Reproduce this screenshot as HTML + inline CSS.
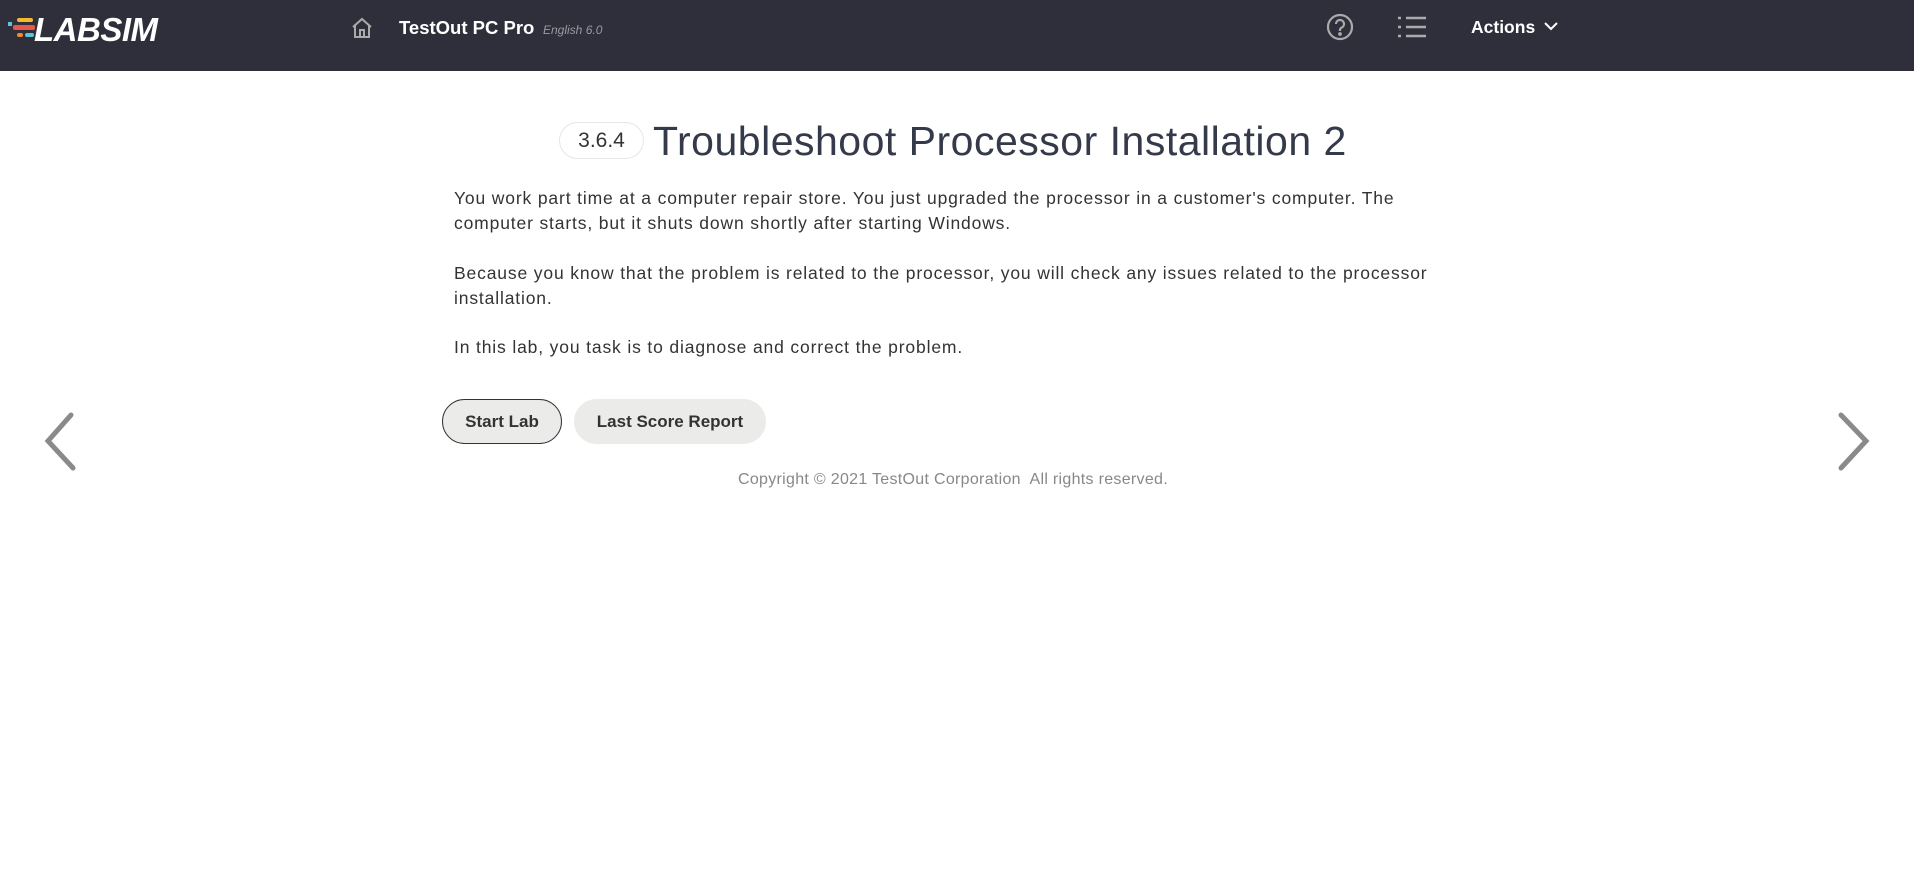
<!DOCTYPE html>
<html><head><meta charset="utf-8"><style>
*{margin:0;padding:0;box-sizing:border-box}
body{width:1914px;height:884px;background:#fff;font-family:"Liberation Sans",sans-serif;position:relative;overflow:hidden;color:#333}
.hdr{position:absolute;left:0;top:0;width:1914px;height:71px;background:#2e2f3b}
.abs{position:absolute;white-space:nowrap}
.p{font-size:17.5px;color:#333;line-height:25px;letter-spacing:0.85px}
.btn{position:absolute;height:45px;border-radius:23px;background:#ebebea;font-weight:bold;font-size:17px;color:#333;display:flex;align-items:center;justify-content:center}
</style></head><body>
<div class="hdr">
  <div class="abs" style="left:8px;top:22px;width:4px;height:4px;background:#5bc6d8"></div>
  <div class="abs" style="left:17px;top:18px;width:16px;height:4px;background:#f5b82e;border-radius:2px"></div>
  <div class="abs" style="left:13px;top:25px;width:22px;height:5px;background:#e8584a;border-radius:2px"></div>
  <div class="abs" style="left:17px;top:33px;width:6px;height:4px;background:#f08a2c;border-radius:2px"></div>
  <div class="abs" style="left:25px;top:33px;width:9px;height:4px;background:#5bc6d8;border-radius:2px"></div>
  <div class="abs" style="left:34px;top:11px;font-size:33px;font-weight:bold;font-style:italic;color:#fff;letter-spacing:-0.5px">LABSIM</div>
  <svg class="abs" style="left:350px;top:16px" width="24" height="24" viewBox="0 0 24 24" fill="none" stroke="#aaa" stroke-width="2"><path d="M3 11 L12 3 L21 11 M5 9 V21 H19 V9 M10 21 V14 H14 V21"/></svg>
  <div class="abs" style="left:399px;top:17px;font-size:18.5px;font-weight:bold;color:#fff">TestOut PC Pro</div>
  <div class="abs" style="left:543px;top:23px;font-size:12px;font-style:italic;color:#9a9aa0">English 6.0</div>
  <svg class="abs" style="left:1326px;top:13px" width="28" height="28" viewBox="0 0 28 28" fill="none" stroke="#aaa" stroke-width="2.2"><circle cx="14" cy="14" r="12"/><path d="M10 11 a4 4 0 1 1 5.5 3.7 c-1 .5-1.5 1.2-1.5 2.3v1"/><circle cx="14" cy="21" r="0.8" fill="#aaa"/></svg>
  <svg class="abs" style="left:1397px;top:15px" width="30" height="24" viewBox="0 0 30 24" stroke="#aaa" stroke-width="2.5"><path d="M1 3h3M9 3h20M1 12h3M9 12h20M1 21h3M9 21h20"/></svg>
  <div class="abs" style="left:1471px;top:17px;font-size:17.5px;font-weight:bold;color:#fff">Actions</div>
  <svg class="abs" style="left:1543px;top:21px" width="16" height="10" viewBox="0 0 16 10" fill="none" stroke="#fff" stroke-width="2"><path d="M2 2 L8 8 L14 2"/></svg>
</div>
<div class="abs" style="left:559px;top:122px;width:85px;height:37px;border:1px solid #e6e6e6;border-radius:19px;font-size:21px;color:#333;display:flex;align-items:center;justify-content:center">3.6.4</div>
<div class="abs" style="left:653px;top:118px;font-size:41px;color:#343a4a;letter-spacing:0.5px">Troubleshoot Processor Installation 2</div>
<div class="abs p" style="left:454px;top:186px">You work part time at a computer repair store. You just upgraded the processor in a customer's computer. The<br>computer starts, but it shuts down shortly after starting Windows.</div>
<div class="abs p" style="left:454px;top:261px">Because you know that the problem is related to the processor, you will check any issues related to the processor<br>installation.</div>
<div class="abs p" style="left:454px;top:335px">In this lab, you task is to diagnose and correct the problem.</div>
<div class="btn" style="left:442px;top:399px;width:120px;border:1px solid #333">Start Lab</div>
<div class="btn" style="left:574px;top:399px;width:192px">Last Score Report</div>
<div class="abs" style="left:0;width:1906px;text-align:center;top:471px;font-size:16px;color:#888;letter-spacing:0.3px">Copyright © 2021 TestOut Corporation&nbsp; All rights reserved.</div>
<svg class="abs" style="left:38px;top:408px" width="44" height="66" viewBox="0 0 44 66" fill="none" stroke="#8a8a8a" stroke-width="5" stroke-linecap="round"><path d="M33 7 L10 33 L35 60"/></svg>
<svg class="abs" style="left:1832px;top:408px" width="44" height="66" viewBox="0 0 44 66" fill="none" stroke="#8a8a8a" stroke-width="5" stroke-linecap="round"><path d="M9 7 L34 33 L9 60"/></svg>
</body></html>
